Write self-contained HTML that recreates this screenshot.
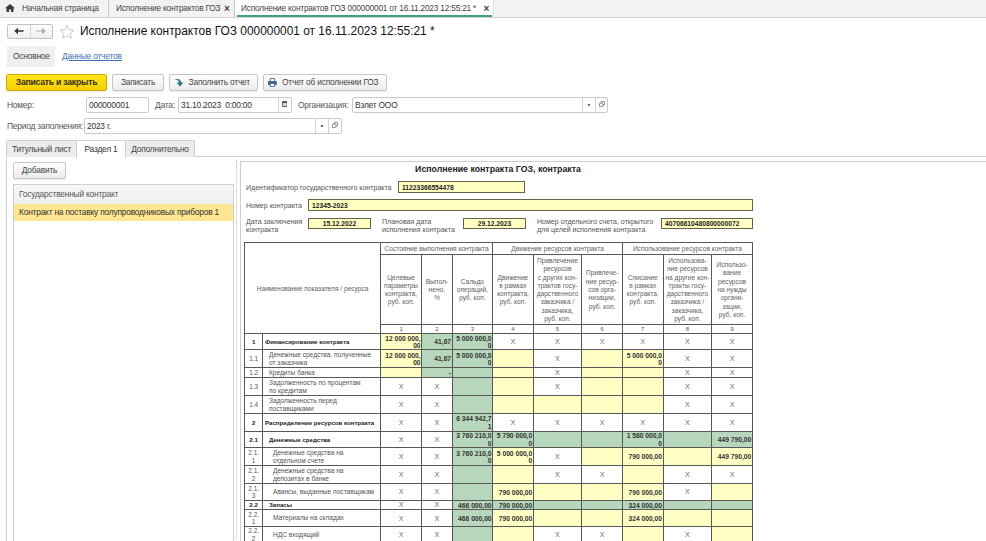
<!DOCTYPE html>
<html lang="ru"><head><meta charset="utf-8"><title>Исполнение контрактов ГОЗ</title>
<style>
*{box-sizing:border-box;margin:0;padding:0}
html,body{width:986px;height:541px;overflow:hidden;background:#fff}
body{font-family:"Liberation Sans",sans-serif;font-size:8px;color:#333;position:relative}
.abs{position:absolute;white-space:nowrap}
#tabbar{left:0;top:0;width:986px;height:18px;background:#f2f2f2;border-bottom:1px solid #d4d4d4}
.ttab{position:absolute;top:0;height:17px;line-height:17px;font-size:8.3px;letter-spacing:-0.2px;color:#444;white-space:nowrap}
.tsep{position:absolute;top:0;width:1px;height:17px;background:#c8c8c8}
#acttab{left:235px;top:0;width:258px;height:17px;background:#fff}
#actln{left:237px;top:15px;width:255px;height:2px;background:#3fa377}
.btn{position:absolute;height:17px;border:1px solid #c6c6c6;border-radius:2px;background:linear-gradient(#ffffff,#ececec);font-size:8.4px;letter-spacing:-0.2px;line-height:15px;color:#444;text-align:center;white-space:nowrap;box-shadow:0 1px 0 rgba(0,0,0,.07)}
.inp{position:absolute;height:16px;border:1px solid #cacaca;border-radius:2px;background:#fff;font-size:8.4px;letter-spacing:-0.2px;line-height:14px;color:#333;padding-left:2px;white-space:nowrap}
.lbl{position:absolute;font-size:8.4px;letter-spacing:-0.2px;line-height:10px;color:#555;white-space:nowrap}
.vd{position:absolute;top:0;width:1px;height:14px;background:#d4d4d4}
.stab{position:absolute;top:139.5px;height:17.5px;border:1px solid #d0d0d0;border-bottom:none;border-radius:2px 2px 0 0;background:#ececec;font-size:8.4px;letter-spacing:-0.2px;line-height:16px;color:#444;text-align:center;white-space:nowrap}
.dl{position:absolute;font-size:7.05px;line-height:8.3px;color:#555;white-space:nowrap}
.yf{position:absolute;background:#ffffc2;border:1px solid #64644c;font-size:6.7px;font-weight:bold;line-height:11px;color:#222;white-space:nowrap}
/* table */
.c{position:absolute;overflow:hidden;font-size:6.6px;line-height:8.3px;color:#555}
.ln{position:absolute;background:#585858}
.mid{display:flex;align-items:center;justify-content:center;text-align:center}
.h{color:#626262;padding-top:1.5px}
.n{font-size:6px}
.num{font-size:6.4px;line-height:7.6px;color:#555;padding-top:0.8px}
.nm{display:flex;align-items:center;text-align:left;line-height:8.2px;padding-top:1px}
.b{font-weight:bold;font-size:6.15px;color:#222}
.x{color:#6a6a6a;font-size:7.2px;padding-top:1.6px}
.v{font-weight:bold;font-size:6.7px;line-height:7.5px;color:#333;text-align:right;padding-right:1px;padding-top:1.6px;display:flex;justify-content:flex-end;align-items:center}
</style></head><body>

<div id="tabbar" class="abs"></div>
<svg class="abs" style="left:5px;top:4px" width="10" height="8" viewBox="0 0 10 8"><path d="M5 0 L10 4.2 H8.5 V8 H6 V5.4 H4 V8 H1.5 V4.2 H0 Z" fill="#3a3a3a"/></svg>
<div class="ttab" style="left:22px">Начальная страница</div>
<div class="tsep" style="left:108px"></div>
<div class="ttab" style="left:116px">Исполнение контрактов ГОЗ</div>
<div class="ttab" style="left:224px;font-size:10px;font-weight:bold;letter-spacing:0">×</div>
<div class="tsep" style="left:234px"></div>
<div id="acttab" class="abs"></div><div id="actln" class="abs"></div>
<div class="ttab" style="left:241px">Исполнение контрактов ГОЗ 000000001 от 16.11.2023 12:55:21 *</div>
<div class="ttab" style="left:483.5px;font-size:10px;font-weight:bold;letter-spacing:0">×</div>
<div class="tsep" style="left:493px;background:#dcdcdc"></div>

<div class="abs" style="left:6.5px;top:23.5px;width:46.5px;height:15px;border:1px solid #c3c3c3;border-radius:2px;background:linear-gradient(#fff,#eee)"></div>
<div class="abs" style="left:30px;top:25px;width:1px;height:13px;background:#d6d6d6"></div>
<svg class="abs" style="left:14px;top:27px" width="10" height="8" viewBox="0 0 10 8"><path d="M0.3 4 L4 0.8 V3.2 H9.5 V4.8 H4 V7.2 Z" fill="#333"/></svg>
<svg class="abs" style="left:36px;top:27px" width="10" height="8" viewBox="0 0 10 8"><path d="M9.7 4 L6 0.8 V3.4 H0.5 V4.6 H6 V7.2 Z" fill="#aaa"/></svg>
<svg class="abs" style="left:59px;top:24px" width="16" height="15" viewBox="0 0 16 15"><path d="M8 1 L10 5.8 L15 6.2 L11.2 9.5 L12.4 14.3 L8 11.7 L3.6 14.3 L4.8 9.5 L1 6.2 L6 5.8 Z" fill="none" stroke="#c4c4c4" stroke-width="0.9"/></svg>
<div class="abs" style="left:80px;top:22px;font-size:11.92px;line-height:18px;color:#111">Исполнение контрактов ГОЗ 000000001 от 16.11.2023 12:55:21 *</div>

<div class="abs" style="left:7px;top:46px;width:48px;height:20.5px;background:#efefef"></div>
<div class="lbl" style="left:13px;top:51px;color:#444">Основное</div>
<div class="lbl" style="left:62px;top:51px;color:#3b73b9;text-decoration:underline">Данные отчетов</div>

<div class="btn" style="left:6px;top:74px;width:101px;background:linear-gradient(#ffe51a,#f6cf00);border-color:#cfad00;color:#3a3000;font-weight:bold;font-size:8.7px;letter-spacing:-0.25px">Записать и закрыть</div>
<div class="btn" style="left:112px;top:74px;width:52px">Записать</div>
<div class="btn" style="left:169px;top:74px;width:89px;padding-left:11.5px">Заполнить отчет</div>
<svg class="abs" style="left:174px;top:78px" width="10" height="9" viewBox="0 0 10 9"><path d="M0.5 1.8 C4 0.2 7 1.5 7 4.5 H9.5 L6 8.5 L2.6 4.5 H5 C5 2.6 3.5 1.6 0.5 1.8 Z" fill="#2a6f8c"/></svg>
<div class="btn" style="left:263px;top:74px;width:124px;padding-left:10.5px">Отчет об исполнении ГОЗ</div>
<svg class="abs" style="left:268px;top:78px" width="9" height="9" viewBox="0 0 9 9"><rect x="0" y="3" width="8.8" height="4.3" rx="1.2" fill="#3f6392"/><rect x="2.2" y="0.5" width="4.4" height="3" rx="0.4" fill="#fff" stroke="#3f6392" stroke-width="0.9"/><rect x="2.2" y="5.5" width="4.4" height="3" fill="#fff" stroke="#3f6392" stroke-width="0.8"/></svg>

<div class="lbl" style="left:7px;top:100px">Номер:</div>
<div class="inp" style="left:86px;top:97px;width:63px">000000001</div>
<div class="lbl" style="left:155px;top:100px">Дата:</div>
<div class="inp" style="left:178px;top:97px;width:114px">31.10.2023&nbsp; 0:00:00<div class="vd" style="left:99px"></div>
<svg style="position:absolute;left:102.6px;top:2.9px" width="5.6" height="5.9" viewBox="0 0 6 6.4"><rect x="0" y="0.4" width="6" height="6" rx="0.6" fill="#555"/><rect x="0.9" y="2.2" width="4.2" height="3.3" fill="#d9d9d9"/><rect x="1.2" y="0" width="0.9" height="1.2" fill="#333"/><rect x="3.9" y="0" width="0.9" height="1.2" fill="#333"/></svg></div>
<div class="lbl" style="left:298px;top:100px">Организация:</div>
<div class="inp" style="left:352px;top:97px;width:256px">Взлет ООО<div class="vd" style="left:228.5px"></div><div class="vd" style="left:241.5px"></div>
<svg style="position:absolute;left:233.8px;top:5.6px" width="4" height="2.4" viewBox="0 0 5 3"><path d="M0.4 0.2 H4.6 L2.5 2.9 Z" fill="#444"/></svg>
<svg style="position:absolute;left:246px;top:3px" width="6.2" height="6.2" viewBox="0 0 7 7"><rect x="2.4" y="0.5" width="4" height="4" fill="none" stroke="#666" stroke-width="0.9" rx="0.8"/><rect x="0.5" y="2.4" width="4" height="4" fill="#fff" stroke="#666" stroke-width="0.9" rx="0.8"/></svg></div>

<div class="lbl" style="left:7px;top:121px">Период заполнения:</div>
<div class="inp" style="left:84px;top:118px;width:258px">2023 г.<div class="vd" style="left:230px"></div><div class="vd" style="left:243px"></div>
<svg style="position:absolute;left:234.8px;top:5.6px" width="4" height="2.4" viewBox="0 0 5 3"><path d="M0.4 0.2 H4.6 L2.5 2.9 Z" fill="#444"/></svg>
<svg style="position:absolute;left:247px;top:3px" width="6.2" height="6.2" viewBox="0 0 7 7"><rect x="2.4" y="0.5" width="4" height="4" fill="none" stroke="#666" stroke-width="0.9" rx="0.8"/><rect x="0.5" y="2.4" width="4" height="4" fill="#fff" stroke="#666" stroke-width="0.9" rx="0.8"/></svg></div>

<div class="abs" style="left:6px;top:156px;width:990px;height:400px;border-left:1px solid #d0d0d0;border-top:1px solid #d0d0d0"></div>
<div class="stab" style="left:6px;width:71px">Титульный лист</div>
<div class="stab" style="left:76px;width:50px;background:#fff;height:18px;color:#333">Раздел 1</div>
<div class="stab" style="left:125px;width:70px">Дополнительно</div>

<div class="btn" style="left:13px;top:162px;width:53px;height:17px">Добавить</div>
<div class="abs" style="left:13px;top:184px;width:221px;height:370px;border:1px solid #d0d0d0;background:#fff"></div>
<div class="abs" style="left:14px;top:185px;width:219px;height:18.5px;background:linear-gradient(#f7f7f7,#f0f0f0)"></div>
<div class="lbl" style="left:19px;top:189px;color:#555">Государственный контракт</div>
<div class="abs" style="left:14px;top:203.5px;width:219px;height:17px;background:#ffe691"></div>
<div class="lbl" style="left:19px;top:207px;color:#333">Контракт на поставку полупроводниковых приборов 1</div>
<div class="abs" style="left:236px;top:160px;width:0;height:390px;border-left:1px dotted #c4c4c4"></div>

<div class="abs" style="left:240px;top:161px;width:760px;height:400px;border:1px solid #cfcfcf;background:#fff"></div>
<div class="abs" style="left:398px;top:163.5px;width:200px;text-align:center;font-size:8.78px;font-weight:bold;line-height:11px;color:#222">Исполнение контракта ГОЗ, контракта</div>

<div class="dl" style="left:246px;top:183.5px">Идентификатор государственного контракта</div>
<div class="yf" style="left:398px;top:181px;width:127px;height:12px;padding-left:3px">11223366554478</div>
<div class="dl" style="left:246px;top:201.5px">Номер контракта</div>
<div class="yf" style="left:308px;top:199px;width:445px;height:12px;padding-left:3px">12345-2023</div>
<div class="dl" style="left:246px;top:218px">Дата заключения<br>контракта</div>
<div class="yf" style="left:308px;top:217.5px;width:63px;height:11.5px;line-height:10.5px;text-align:center">15.12.2022</div>
<div class="dl" style="left:382px;top:218px">Плановая дата<br>исполнения контракта</div>
<div class="yf" style="left:463px;top:217.5px;width:63px;height:11.5px;line-height:10.5px;text-align:center">29.12.2023</div>
<div class="dl" style="left:537px;top:218px">Номер отдельного счета, открытого<br>для целей исполнения контракта</div>
<div class="yf" style="left:661px;top:217.5px;width:92px;height:11.5px;line-height:10.5px;padding-left:3px">40706810480800000072</div>

<div class="c h mid" style="left:244.60px;top:242.50px;width:136.00px;height:90.80px;"><span>Наименование показателя / ресурса</span></div>
<div class="c h mid" style="left:380.60px;top:242.50px;width:112.00px;height:11.80px;"><span>Состояние выполнения контракта</span></div>
<div class="c h mid" style="left:492.60px;top:242.50px;width:129.90px;height:11.80px;"><span>Движение ресурсов контракта</span></div>
<div class="c h mid" style="left:622.50px;top:242.50px;width:129.80px;height:11.80px;"><span>Использование ресурсов контракта</span></div>
<div class="c h mid" style="left:380.60px;top:254.30px;width:41.00px;height:70.20px;"><span>Целевые<br>параметры<br>контракта,<br>руб. коп.</span></div>
<div class="c n mid" style="left:380.60px;top:324.50px;width:41.00px;height:8.80px;"><span>1</span></div>
<div class="c h mid" style="left:421.60px;top:254.30px;width:30.50px;height:70.20px;"><span>Выпол-<br>нено,<br>%</span></div>
<div class="c n mid" style="left:421.60px;top:324.50px;width:30.50px;height:8.80px;"><span>2</span></div>
<div class="c h mid" style="left:452.10px;top:254.30px;width:40.50px;height:70.20px;"><span>Сальдо<br>операций,<br>руб. коп.</span></div>
<div class="c n mid" style="left:452.10px;top:324.50px;width:40.50px;height:8.80px;"><span>3</span></div>
<div class="c h mid" style="left:492.60px;top:254.30px;width:40.60px;height:70.20px;"><span>Движение<br>в рамках<br>контракта,<br>руб. коп.</span></div>
<div class="c n mid" style="left:492.60px;top:324.50px;width:40.60px;height:8.80px;"><span>4</span></div>
<div class="c h mid" style="left:533.20px;top:254.30px;width:48.50px;height:70.20px;"><span>Привлечение<br>ресурсов<br>с других кон-<br>трактов госу-<br>дарственного<br>заказчика /<br>заказчика,<br>руб. коп.</span></div>
<div class="c n mid" style="left:533.20px;top:324.50px;width:48.50px;height:8.80px;"><span>5</span></div>
<div class="c h mid" style="left:581.70px;top:254.30px;width:40.80px;height:70.20px;"><span>Привлече-<br>ние ресур-<br>сов орга-<br>низации,<br>руб. коп.</span></div>
<div class="c n mid" style="left:581.70px;top:324.50px;width:40.80px;height:8.80px;"><span>6</span></div>
<div class="c h mid" style="left:622.50px;top:254.30px;width:40.50px;height:70.20px;"><span>Списание<br>в рамках<br>контракта,<br>руб. коп.</span></div>
<div class="c n mid" style="left:622.50px;top:324.50px;width:40.50px;height:8.80px;"><span>7</span></div>
<div class="c h mid" style="left:663.00px;top:254.30px;width:48.80px;height:70.20px;"><span>Использова-<br>ние ресурсов<br>на другие кон-<br>тракты госу-<br>дарственного<br>заказчика /<br>заказчика,<br>руб. коп.</span></div>
<div class="c n mid" style="left:663.00px;top:324.50px;width:48.80px;height:8.80px;"><span>8</span></div>
<div class="c h mid" style="left:711.80px;top:254.30px;width:40.50px;height:70.20px;"><span>Использо-<br>вание<br>ресурсов<br>на нужды<br>органи-<br>зации,<br>руб. коп.</span></div>
<div class="c n mid" style="left:711.80px;top:324.50px;width:40.50px;height:8.80px;"><span>9</span></div>
<div class="c num mid b" style="left:244.60px;top:333.30px;width:18.10px;height:16.00px;"><span>1</span></div>
<div class="c nm b" style="left:262.70px;top:333.30px;width:117.90px;height:16.00px;padding-left:2.3px;"><span>Финансирование контракта</span></div>
<div class="c v" style="left:380.60px;top:333.30px;width:41.00px;height:16.00px;background:#ffffc4;"><span>12 000 000,<br>00</span></div>
<div class="c v" style="left:421.60px;top:333.30px;width:30.50px;height:16.00px;background:#b6d7bb;"><span>41,67</span></div>
<div class="c v" style="left:452.10px;top:333.30px;width:40.50px;height:16.00px;background:#b6d7bb;"><span>5 000 000,0<br>0</span></div>
<div class="c x mid" style="left:492.60px;top:333.30px;width:40.60px;height:16.00px;"><span>Х</span></div>
<div class="c x mid" style="left:533.20px;top:333.30px;width:48.50px;height:16.00px;"><span>Х</span></div>
<div class="c x mid" style="left:581.70px;top:333.30px;width:40.80px;height:16.00px;"><span>Х</span></div>
<div class="c x mid" style="left:622.50px;top:333.30px;width:40.50px;height:16.00px;"><span>Х</span></div>
<div class="c x mid" style="left:663.00px;top:333.30px;width:48.80px;height:16.00px;"><span>Х</span></div>
<div class="c x mid" style="left:711.80px;top:333.30px;width:40.50px;height:16.00px;"><span>Х</span></div>
<div class="c num mid" style="left:244.60px;top:349.30px;width:18.10px;height:18.00px;"><span>1.1</span></div>
<div class="c nm" style="left:262.70px;top:349.30px;width:117.90px;height:18.00px;padding-left:6.3px;"><span>Денежные средства, полученные<br>от заказчика</span></div>
<div class="c v" style="left:380.60px;top:349.30px;width:41.00px;height:18.00px;background:#ffffc4;"><span>12 000 000,<br>00</span></div>
<div class="c v" style="left:421.60px;top:349.30px;width:30.50px;height:18.00px;background:#b6d7bb;"><span>41,67</span></div>
<div class="c v" style="left:452.10px;top:349.30px;width:40.50px;height:18.00px;background:#b6d7bb;"><span>5 000 000,0<br>0</span></div>
<div class="c v" style="left:492.60px;top:349.30px;width:40.60px;height:18.00px;background:#ffffc4;"></div>
<div class="c x mid" style="left:533.20px;top:349.30px;width:48.50px;height:18.00px;"><span>Х</span></div>
<div class="c v" style="left:581.70px;top:349.30px;width:40.80px;height:18.00px;background:#ffffc4;"></div>
<div class="c v" style="left:622.50px;top:349.30px;width:40.50px;height:18.00px;background:#ffffc4;"><span>5 000 000,0<br>0</span></div>
<div class="c x mid" style="left:663.00px;top:349.30px;width:48.80px;height:18.00px;"><span>Х</span></div>
<div class="c x mid" style="left:711.80px;top:349.30px;width:40.50px;height:18.00px;"><span>Х</span></div>
<div class="c num mid" style="left:244.60px;top:367.30px;width:18.10px;height:10.00px;"><span>1.2</span></div>
<div class="c nm" style="left:262.70px;top:367.30px;width:117.90px;height:10.00px;padding-left:6.3px;"><span>Кредиты банка</span></div>
<div class="c v" style="left:380.60px;top:367.30px;width:41.00px;height:10.00px;background:#ffffc4;"></div>
<div class="c v" style="left:421.60px;top:367.30px;width:30.50px;height:10.00px;background:#b6d7bb;padding-top:1px;"><span>-</span></div>
<div class="c v" style="left:452.10px;top:367.30px;width:40.50px;height:10.00px;background:#b6d7bb;"></div>
<div class="c v" style="left:492.60px;top:367.30px;width:40.60px;height:10.00px;background:#ffffc4;"></div>
<div class="c x mid" style="left:533.20px;top:367.30px;width:48.50px;height:10.00px;"><span>Х</span></div>
<div class="c v" style="left:581.70px;top:367.30px;width:40.80px;height:10.00px;background:#ffffc4;"></div>
<div class="c v" style="left:622.50px;top:367.30px;width:40.50px;height:10.00px;background:#ffffc4;"></div>
<div class="c x mid" style="left:663.00px;top:367.30px;width:48.80px;height:10.00px;"><span>Х</span></div>
<div class="c x mid" style="left:711.80px;top:367.30px;width:40.50px;height:10.00px;"><span>Х</span></div>
<div class="c num mid" style="left:244.60px;top:377.30px;width:18.10px;height:17.90px;"><span>1.3</span></div>
<div class="c nm" style="left:262.70px;top:377.30px;width:117.90px;height:17.90px;padding-left:6.3px;"><span>Задолженность по процентам<br>по кредитам</span></div>
<div class="c x mid" style="left:380.60px;top:377.30px;width:41.00px;height:17.90px;"><span>Х</span></div>
<div class="c x mid" style="left:421.60px;top:377.30px;width:30.50px;height:17.90px;"><span>Х</span></div>
<div class="c v" style="left:452.10px;top:377.30px;width:40.50px;height:17.90px;background:#b6d7bb;"></div>
<div class="c v" style="left:492.60px;top:377.30px;width:40.60px;height:17.90px;background:#ffffc4;"></div>
<div class="c x mid" style="left:533.20px;top:377.30px;width:48.50px;height:17.90px;"><span>Х</span></div>
<div class="c v" style="left:581.70px;top:377.30px;width:40.80px;height:17.90px;background:#ffffc4;"></div>
<div class="c v" style="left:622.50px;top:377.30px;width:40.50px;height:17.90px;background:#ffffc4;"></div>
<div class="c x mid" style="left:663.00px;top:377.30px;width:48.80px;height:17.90px;"><span>Х</span></div>
<div class="c x mid" style="left:711.80px;top:377.30px;width:40.50px;height:17.90px;"><span>Х</span></div>
<div class="c num mid" style="left:244.60px;top:395.20px;width:18.10px;height:18.10px;"><span>1.4</span></div>
<div class="c nm" style="left:262.70px;top:395.20px;width:117.90px;height:18.10px;padding-left:6.3px;"><span>Задолженность перед<br>поставщиками</span></div>
<div class="c x mid" style="left:380.60px;top:395.20px;width:41.00px;height:18.10px;"><span>Х</span></div>
<div class="c x mid" style="left:421.60px;top:395.20px;width:30.50px;height:18.10px;"><span>Х</span></div>
<div class="c v" style="left:452.10px;top:395.20px;width:40.50px;height:18.10px;background:#b6d7bb;"></div>
<div class="c v" style="left:492.60px;top:395.20px;width:40.60px;height:18.10px;background:#ffffc4;"></div>
<div class="c v" style="left:533.20px;top:395.20px;width:48.50px;height:18.10px;background:#ffffc4;"></div>
<div class="c v" style="left:581.70px;top:395.20px;width:40.80px;height:18.10px;background:#ffffc4;"></div>
<div class="c v" style="left:622.50px;top:395.20px;width:40.50px;height:18.10px;background:#ffffc4;"></div>
<div class="c x mid" style="left:663.00px;top:395.20px;width:48.80px;height:18.10px;"><span>Х</span></div>
<div class="c x mid" style="left:711.80px;top:395.20px;width:40.50px;height:18.10px;"><span>Х</span></div>
<div class="c num mid b" style="left:244.60px;top:413.30px;width:18.10px;height:17.70px;"><span>2</span></div>
<div class="c nm b" style="left:262.70px;top:413.30px;width:117.90px;height:17.70px;padding-left:2.3px;"><span>Распределение ресурсов контракта</span></div>
<div class="c x mid" style="left:380.60px;top:413.30px;width:41.00px;height:17.70px;"><span>Х</span></div>
<div class="c x mid" style="left:421.60px;top:413.30px;width:30.50px;height:17.70px;"><span>Х</span></div>
<div class="c v" style="left:452.10px;top:413.30px;width:40.50px;height:17.70px;background:#b6d7bb;"><span>6 344 942,7<br>1</span></div>
<div class="c x mid" style="left:492.60px;top:413.30px;width:40.60px;height:17.70px;"><span>Х</span></div>
<div class="c x mid" style="left:533.20px;top:413.30px;width:48.50px;height:17.70px;"><span>Х</span></div>
<div class="c x mid" style="left:581.70px;top:413.30px;width:40.80px;height:17.70px;"><span>Х</span></div>
<div class="c x mid" style="left:622.50px;top:413.30px;width:40.50px;height:17.70px;"><span>Х</span></div>
<div class="c x mid" style="left:663.00px;top:413.30px;width:48.80px;height:17.70px;"><span>Х</span></div>
<div class="c x mid" style="left:711.80px;top:413.30px;width:40.50px;height:17.70px;"><span>Х</span></div>
<div class="c num mid b" style="left:244.60px;top:431.00px;width:18.10px;height:16.30px;"><span>2.1</span></div>
<div class="c nm b" style="left:262.70px;top:431.00px;width:117.90px;height:16.30px;padding-left:6.3px;"><span>Денежные средства</span></div>
<div class="c x mid" style="left:380.60px;top:431.00px;width:41.00px;height:16.30px;"><span>Х</span></div>
<div class="c x mid" style="left:421.60px;top:431.00px;width:30.50px;height:16.30px;"><span>Х</span></div>
<div class="c v" style="left:452.10px;top:431.00px;width:40.50px;height:16.30px;background:#b6d7bb;"><span>3 760 210,0<br>0</span></div>
<div class="c v" style="left:492.60px;top:431.00px;width:40.60px;height:16.30px;background:#b6d7bb;"><span>5 790 000,0<br>0</span></div>
<div class="c v" style="left:533.20px;top:431.00px;width:48.50px;height:16.30px;background:#b6d7bb;"></div>
<div class="c v" style="left:581.70px;top:431.00px;width:40.80px;height:16.30px;background:#b6d7bb;"></div>
<div class="c v" style="left:622.50px;top:431.00px;width:40.50px;height:16.30px;background:#b6d7bb;"><span>1 580 000,0<br>0</span></div>
<div class="c v" style="left:663.00px;top:431.00px;width:48.80px;height:16.30px;background:#b6d7bb;"></div>
<div class="c v" style="left:711.80px;top:431.00px;width:40.50px;height:16.30px;background:#b6d7bb;"><span>449 790,00</span></div>
<div class="c num mid" style="left:244.60px;top:447.30px;width:18.10px;height:18.00px;"><span>2.1.<br>1</span></div>
<div class="c nm" style="left:262.70px;top:447.30px;width:117.90px;height:18.00px;padding-left:10.3px;"><span>Денежные средства на<br>отдельном счете</span></div>
<div class="c x mid" style="left:380.60px;top:447.30px;width:41.00px;height:18.00px;"><span>Х</span></div>
<div class="c x mid" style="left:421.60px;top:447.30px;width:30.50px;height:18.00px;"><span>Х</span></div>
<div class="c v" style="left:452.10px;top:447.30px;width:40.50px;height:18.00px;background:#b6d7bb;"><span>3 760 210,0<br>0</span></div>
<div class="c v" style="left:492.60px;top:447.30px;width:40.60px;height:18.00px;background:#ffffc4;"><span>5 000 000,0<br>0</span></div>
<div class="c x mid" style="left:533.20px;top:447.30px;width:48.50px;height:18.00px;"><span>Х</span></div>
<div class="c v" style="left:581.70px;top:447.30px;width:40.80px;height:18.00px;background:#ffffc4;"></div>
<div class="c v" style="left:622.50px;top:447.30px;width:40.50px;height:18.00px;background:#ffffc4;"><span>790 000,00</span></div>
<div class="c v" style="left:663.00px;top:447.30px;width:48.80px;height:18.00px;background:#ffffc4;"></div>
<div class="c v" style="left:711.80px;top:447.30px;width:40.50px;height:18.00px;background:#ffffc4;"><span>449 790,00</span></div>
<div class="c num mid" style="left:244.60px;top:465.30px;width:18.10px;height:18.20px;"><span>2.1.<br>2</span></div>
<div class="c nm" style="left:262.70px;top:465.30px;width:117.90px;height:18.20px;padding-left:10.3px;"><span>Денежные средства на<br>депозитах в банке</span></div>
<div class="c x mid" style="left:380.60px;top:465.30px;width:41.00px;height:18.20px;"><span>Х</span></div>
<div class="c x mid" style="left:421.60px;top:465.30px;width:30.50px;height:18.20px;"><span>Х</span></div>
<div class="c v" style="left:452.10px;top:465.30px;width:40.50px;height:18.20px;background:#b6d7bb;"></div>
<div class="c v" style="left:492.60px;top:465.30px;width:40.60px;height:18.20px;background:#ffffc4;"></div>
<div class="c x mid" style="left:533.20px;top:465.30px;width:48.50px;height:18.20px;"><span>Х</span></div>
<div class="c x mid" style="left:581.70px;top:465.30px;width:40.80px;height:18.20px;"><span>Х</span></div>
<div class="c v" style="left:622.50px;top:465.30px;width:40.50px;height:18.20px;background:#ffffc4;"></div>
<div class="c x mid" style="left:663.00px;top:465.30px;width:48.80px;height:18.20px;"><span>Х</span></div>
<div class="c x mid" style="left:711.80px;top:465.30px;width:40.50px;height:18.20px;"><span>Х</span></div>
<div class="c num mid" style="left:244.60px;top:483.50px;width:18.10px;height:16.70px;"><span>2.1.<br>3</span></div>
<div class="c nm" style="left:262.70px;top:483.50px;width:117.90px;height:16.70px;padding-left:10.3px;"><span>Авансы, выданные поставщикам</span></div>
<div class="c x mid" style="left:380.60px;top:483.50px;width:41.00px;height:16.70px;"><span>Х</span></div>
<div class="c x mid" style="left:421.60px;top:483.50px;width:30.50px;height:16.70px;"><span>Х</span></div>
<div class="c v" style="left:452.10px;top:483.50px;width:40.50px;height:16.70px;background:#b6d7bb;"></div>
<div class="c v" style="left:492.60px;top:483.50px;width:40.60px;height:16.70px;background:#ffffc4;"><span>790 000,00</span></div>
<div class="c v" style="left:533.20px;top:483.50px;width:48.50px;height:16.70px;background:#ffffc4;"></div>
<div class="c v" style="left:581.70px;top:483.50px;width:40.80px;height:16.70px;background:#ffffc4;"></div>
<div class="c v" style="left:622.50px;top:483.50px;width:40.50px;height:16.70px;background:#ffffc4;"><span>790 000,00</span></div>
<div class="c x mid" style="left:663.00px;top:483.50px;width:48.80px;height:16.70px;"><span>Х</span></div>
<div class="c v" style="left:711.80px;top:483.50px;width:40.50px;height:16.70px;background:#ffffc4;"></div>
<div class="c num mid b" style="left:244.60px;top:500.20px;width:18.10px;height:9.20px;"><span>2.2</span></div>
<div class="c nm b" style="left:262.70px;top:500.20px;width:117.90px;height:9.20px;padding-left:6.3px;"><span>Запасы</span></div>
<div class="c x mid" style="left:380.60px;top:500.20px;width:41.00px;height:9.20px;"><span>Х</span></div>
<div class="c x mid" style="left:421.60px;top:500.20px;width:30.50px;height:9.20px;"><span>Х</span></div>
<div class="c v" style="left:452.10px;top:500.20px;width:40.50px;height:9.20px;background:#b6d7bb;"><span>466 000,00</span></div>
<div class="c v" style="left:492.60px;top:500.20px;width:40.60px;height:9.20px;background:#b6d7bb;"><span>790 000,00</span></div>
<div class="c v" style="left:533.20px;top:500.20px;width:48.50px;height:9.20px;background:#b6d7bb;"></div>
<div class="c v" style="left:581.70px;top:500.20px;width:40.80px;height:9.20px;background:#b6d7bb;"></div>
<div class="c v" style="left:622.50px;top:500.20px;width:40.50px;height:9.20px;background:#b6d7bb;"><span>324 000,00</span></div>
<div class="c v" style="left:663.00px;top:500.20px;width:48.80px;height:9.20px;background:#b6d7bb;"></div>
<div class="c v" style="left:711.80px;top:500.20px;width:40.50px;height:9.20px;background:#b6d7bb;"></div>
<div class="c num mid" style="left:244.60px;top:509.40px;width:18.10px;height:17.10px;"><span>2.2.<br>1</span></div>
<div class="c nm" style="left:262.70px;top:509.40px;width:117.90px;height:17.10px;padding-left:10.3px;"><span>Материалы на складах</span></div>
<div class="c x mid" style="left:380.60px;top:509.40px;width:41.00px;height:17.10px;"><span>Х</span></div>
<div class="c x mid" style="left:421.60px;top:509.40px;width:30.50px;height:17.10px;"><span>Х</span></div>
<div class="c v" style="left:452.10px;top:509.40px;width:40.50px;height:17.10px;background:#b6d7bb;"><span>466 000,00</span></div>
<div class="c v" style="left:492.60px;top:509.40px;width:40.60px;height:17.10px;background:#ffffc4;"><span>790 000,00</span></div>
<div class="c v" style="left:533.20px;top:509.40px;width:48.50px;height:17.10px;background:#ffffc4;"></div>
<div class="c v" style="left:581.70px;top:509.40px;width:40.80px;height:17.10px;background:#ffffc4;"></div>
<div class="c v" style="left:622.50px;top:509.40px;width:40.50px;height:17.10px;background:#ffffc4;"><span>324 000,00</span></div>
<div class="c v" style="left:663.00px;top:509.40px;width:48.80px;height:17.10px;background:#ffffc4;"></div>
<div class="c v" style="left:711.80px;top:509.40px;width:40.50px;height:17.10px;background:#ffffc4;"></div>
<div class="c num mid" style="left:244.60px;top:526.50px;width:18.10px;height:15.80px;"><span>2.2.<br>2</span></div>
<div class="c nm" style="left:262.70px;top:526.50px;width:117.90px;height:15.80px;padding-left:10.3px;"><span>НДС входящий</span></div>
<div class="c x mid" style="left:380.60px;top:526.50px;width:41.00px;height:15.80px;"><span>Х</span></div>
<div class="c x mid" style="left:421.60px;top:526.50px;width:30.50px;height:15.80px;"><span>Х</span></div>
<div class="c v" style="left:452.10px;top:526.50px;width:40.50px;height:15.80px;background:#b6d7bb;"></div>
<div class="c v" style="left:492.60px;top:526.50px;width:40.60px;height:15.80px;background:#ffffc4;"></div>
<div class="c x mid" style="left:533.20px;top:526.50px;width:48.50px;height:15.80px;"><span>Х</span></div>
<div class="c x mid" style="left:581.70px;top:526.50px;width:40.80px;height:15.80px;"><span>Х</span></div>
<div class="c v" style="left:622.50px;top:526.50px;width:40.50px;height:15.80px;background:#ffffc4;"></div>
<div class="c x mid" style="left:663.00px;top:526.50px;width:48.80px;height:15.80px;"><span>Х</span></div>
<div class="c v" style="left:711.80px;top:526.50px;width:40.50px;height:15.80px;background:#ffffc4;"></div>
<div class="ln" style="left:244.10px;top:242.00px;width:508.70px;height:1px"></div>
<div class="ln" style="left:380.10px;top:253.80px;width:372.70px;height:1px"></div>
<div class="ln" style="left:380.10px;top:324.00px;width:372.70px;height:1px"></div>
<div class="ln" style="left:244.10px;top:332.80px;width:508.70px;height:1px"></div>
<div class="ln" style="left:244.10px;top:348.80px;width:508.70px;height:1px"></div>
<div class="ln" style="left:244.10px;top:366.80px;width:508.70px;height:1px"></div>
<div class="ln" style="left:244.10px;top:376.80px;width:508.70px;height:1px"></div>
<div class="ln" style="left:244.10px;top:394.70px;width:508.70px;height:1px"></div>
<div class="ln" style="left:244.10px;top:412.80px;width:508.70px;height:1px"></div>
<div class="ln" style="left:244.10px;top:430.50px;width:508.70px;height:1px"></div>
<div class="ln" style="left:244.10px;top:446.80px;width:508.70px;height:1px"></div>
<div class="ln" style="left:244.10px;top:464.80px;width:508.70px;height:1px"></div>
<div class="ln" style="left:244.10px;top:483.00px;width:508.70px;height:1px"></div>
<div class="ln" style="left:244.10px;top:499.70px;width:508.70px;height:1px"></div>
<div class="ln" style="left:244.10px;top:508.90px;width:508.70px;height:1px"></div>
<div class="ln" style="left:244.10px;top:526.00px;width:508.70px;height:1px"></div>
<div class="ln" style="left:244.10px;top:541.80px;width:508.70px;height:1px"></div>
<div class="ln" style="left:244.10px;top:242.00px;width:1px;height:303.50px"></div>
<div class="ln" style="left:262.20px;top:332.80px;width:1px;height:212.70px"></div>
<div class="ln" style="left:380.10px;top:242.00px;width:1px;height:303.50px"></div>
<div class="ln" style="left:421.10px;top:253.80px;width:1px;height:291.70px"></div>
<div class="ln" style="left:451.60px;top:253.80px;width:1px;height:291.70px"></div>
<div class="ln" style="left:492.10px;top:242.00px;width:1px;height:303.50px"></div>
<div class="ln" style="left:532.70px;top:253.80px;width:1px;height:291.70px"></div>
<div class="ln" style="left:581.20px;top:253.80px;width:1px;height:291.70px"></div>
<div class="ln" style="left:622.00px;top:242.00px;width:1px;height:303.50px"></div>
<div class="ln" style="left:662.50px;top:253.80px;width:1px;height:291.70px"></div>
<div class="ln" style="left:711.30px;top:253.80px;width:1px;height:291.70px"></div>
<div class="ln" style="left:751.80px;top:242.00px;width:1px;height:303.50px"></div>
</body></html>
